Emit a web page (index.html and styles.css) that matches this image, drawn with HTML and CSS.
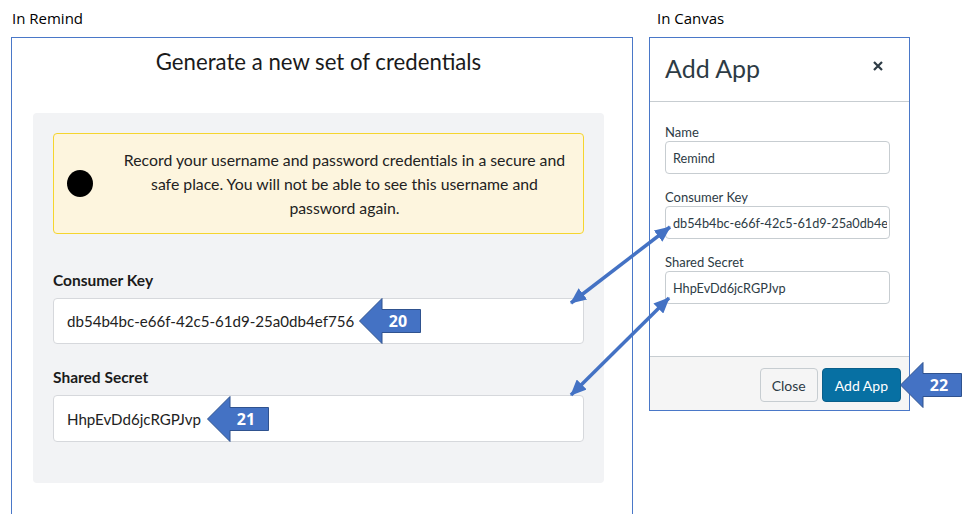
FILE: index.html
```html
<!DOCTYPE html>
<html lang="en">
<head>
<meta charset="utf-8">
<title>Credentials</title>
<link rel="stylesheet" href="styles.css">
</head>
<body>
<div class="page">
  <section class="col col-remind">
    <div class="caption">In Remind</div>
    <div class="panel remind">
      <h1 class="r-title">Generate a new set of credentials</h1>
      <div class="r-card">
        <div class="alert">
          <span class="dot"></span>
          <div class="alert-body">
            <p class="alert-text">Record your username and password credentials in a secure and safe place. You will not be able to see this username and password again.</p>
          </div>
        </div>
        <div class="r-field">
          <div class="r-label">Consumer Key</div>
          <div class="r-input">db54b4bc-e66f-42c5-61d9-25a0db4ef756</div>
        </div>
        <div class="r-field">
          <div class="r-label">Shared Secret</div>
          <div class="r-input">HhpEvDd6jcRGPJvp</div>
        </div>
      </div>
    </div>
  </section>
  <section class="col col-canvas">
    <div class="caption">In Canvas</div>
    <div class="panel canvas">
      <div class="c-head">
        <span class="c-title">Add App</span>
        <svg class="c-close" width="12" height="12" viewBox="0 0 12 12"><path d="M2 2 L10 10 M10 2 L2 10" /></svg>
      </div>
      <div class="c-body">
        <label class="c-field">
          <span class="c-label">Name</span>
          <input class="c-input" type="text" value="Remind" readonly>
        </label>
        <label class="c-field">
          <span class="c-label">Consumer Key</span>
          <input class="c-input" type="text" value="db54b4bc-e66f-42c5-61d9-25a0db4ef756" readonly>
        </label>
        <label class="c-field">
          <span class="c-label">Shared Secret</span>
          <input class="c-input" type="text" value="HhpEvDd6jcRGPJvp" readonly>
        </label>
      </div>
      <div class="c-foot">
        <button class="btn btn-close">Close</button>
        <button class="btn btn-primary">Add App</button>
      </div>
    </div>
  </section>
</div>

<svg class="links" width="962" height="514" viewBox="0 0 962 514">
  <defs>
    <marker id="head" markerUnits="userSpaceOnUse" markerWidth="16" markerHeight="14" refX="15" refY="7" orient="auto-start-reverse">
      <path d="M0 0 L16 7 L0 14 Z" fill="#4472c4" />
    </marker>
  </defs>
  <line x1="571" y1="303" x2="670" y2="227" marker-start="url(#head)" marker-end="url(#head)" />
  <line x1="571" y1="395" x2="669" y2="298" marker-start="url(#head)" marker-end="url(#head)" />
</svg>

<div class="callout callout-20">
  <svg width="64" height="48" viewBox="0 0 64 48"><polygon points="1.5,24 24,1.5 24,12.5 62.5,12.5 62.5,35.5 24,35.5 24,46.5" /></svg>
  <span>20</span>
</div>
<div class="callout callout-21">
  <svg width="64" height="48" viewBox="0 0 64 48"><polygon points="1.5,24 24,1.5 24,12.5 62.5,12.5 62.5,35.5 24,35.5 24,46.5" /></svg>
  <span>21</span>
</div>
<div class="callout callout-22">
  <svg width="64" height="48" viewBox="0 0 64 48"><polygon points="1.5,24 24,1.5 24,12.5 62.5,12.5 62.5,35.5 24,35.5 24,46.5" /></svg>
  <span>22</span>
</div>
</body>
</html>
```

FILE: styles.css
```css
* { box-sizing: border-box; }
html, body { margin: 0; padding: 0; }
body {
  width: 962px;
  height: 514px;
  overflow: hidden;
  position: relative;
  background: #fff;
  font-family: Lato, "Liberation Sans", sans-serif;
  color: #1d1d1d;
}
.page { display: flex; gap: 16px; padding-left: 11px; }
.col-remind { width: 622px; }
.col-canvas { width: 261px; }
.caption {
  height: 37px;
  font-family: "Open Sans", "Liberation Sans", sans-serif;
  font-size: 15px;
  line-height: 36px;
  color: #000;
  padding-left: 1px;
}
.col-canvas .caption { padding-left: 8px; }
.panel { border: 1px solid #4a78c8; }

/* Remind */
.remind { height: 478px; padding: 0 28px 0 21px; }
.r-title {
  margin: 11px 0 0;
  font-size: 22.2px;
  line-height: 26px;
  font-weight: 400;
  text-align: center;
  color: #1a1a1a;
}
.r-card {
  margin-top: 38px;
  background: #f2f3f5;
  border-radius: 4px;
  padding: 20px 20px 41px;
}
.alert {
  display: flex;
  align-items: center;
  height: 101px;
  background: #fdf5de;
  border: 1px solid #f5d52e;
  border-radius: 4px;
  padding: 0 0 0 13px;
}
.dot {
  width: 26px;
  height: 27px;
  border-radius: 50%;
  background: #000;
  flex: none;
}
.alert-body { flex: 1; margin-left: 13px; display: flex; justify-content: center; }
.alert-text {
  margin: 0;
  max-width: 447px;
  font-size: 15.8px;
  line-height: 24px;
  text-align: center;
  color: #222;
}
.r-field { margin-top: 23px; }
.alert + .r-field { margin-top: 36px; }
.r-label {
  font-size: 15.5px;
  line-height: 20px;
  font-weight: 700;
  color: #1b1b1b;
  margin-bottom: 8px;
}
.r-input {
  height: 46px;
  display: flex;
  align-items: center;
  background: #fff;
  border: 1px solid #d6d8dc;
  border-radius: 4px;
  padding: 0 13px;
  font-size: 15.1px;
  color: #222;
}
.r-field + .r-field .r-input { height: 47px; }

/* Canvas */
.canvas { height: 374px; display: flex; flex-direction: column; color: #2d3b45; }
.c-head {
  height: 64px;
  flex: none;
  display: flex;
  align-items: center;
  justify-content: space-between;
  padding: 0 25px 4px 15px;
  border-bottom: 1px solid #c7cdd1;
}
.c-title { font-size: 25px; line-height: 30px; font-weight: 400; color: #2d3b45; }
.c-close { margin-bottom: 4px; }
.c-close path { stroke: #2d3b45; stroke-width: 2.2; fill: none; }
.c-body { flex: 1; padding: 22px 19px 0 15px; }
.c-field { display: block; }
.c-field + .c-field { margin-top: 15px; }
.c-label { display: block; font-size: 13px; line-height: 16px; color: #2d3b45; }
.c-input {
  display: block;
  width: 100%;
  margin: 1px 0 0;
  height: 33px;
  border: 1px solid #c7cdd1;
  border-radius: 4px;
  padding: 0 2px 0 7px;
  font-family: Lato, "Liberation Sans", sans-serif;
  font-size: 12.7px;
  color: #2d3b45;
  background: #fff;
  outline: none;
}
.c-foot {
  height: 54px;
  flex: none;
  background: #f5f5f5;
  border-top: 1px solid #c7cdd1;
  display: flex;
  justify-content: flex-end;
  align-items: flex-start;
  gap: 4px;
  padding: 11px 8px 0 0;
}
.btn {
  height: 34px;
  border-radius: 4px;
  font-family: Lato, "Liberation Sans", sans-serif;
  font-size: 14px;
  padding: 0 11px;
  cursor: pointer;
}
.btn-close { background: #f5f5f5; border: 1px solid #c7cdd1; color: #2d3b45; }
.btn-primary { background: #0770a3; border: 1px solid #0a5f8a; color: #fff; padding: 0 12px; }

/* overlays */
.links { position: absolute; left: 0; top: 0; pointer-events: none; }
.links line { stroke: #4472c4; stroke-width: 3.5; }
.callout { position: absolute; width: 64px; height: 48px; }
.callout svg { display: block; }
.callout polygon { fill: #4472c4; stroke: #2f528f; stroke-width: 1; }
.callout span {
  position: absolute;
  left: 18px;
  right: 2px;
  top: 12px;
  bottom: 12px;
  display: flex;
  align-items: center;
  justify-content: center;
  color: #fff;
  font-family: "Open Sans", "Liberation Sans", sans-serif;
  font-weight: 700;
  font-size: 16px;
}
.callout-20 { left: 358px; top: 297px; }
.callout-21 { left: 206px; top: 395px; }
.callout-22 { left: 899px; top: 361px; }
```
